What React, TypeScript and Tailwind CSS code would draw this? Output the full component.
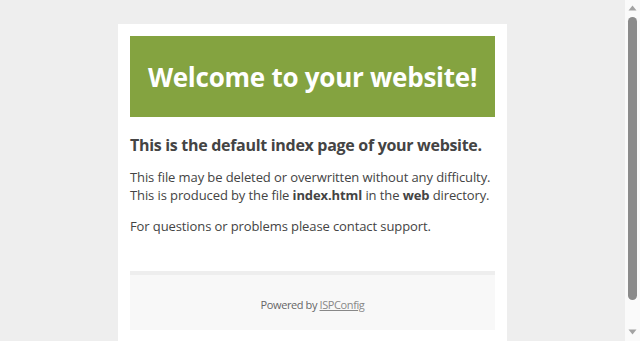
import React from "react";

function Scrollbar() {
  return (
    <div className="flex h-[341px] w-[15px] shrink-0 flex-col items-center bg-[#fafafa]">
      <div className="flex h-[15px] w-full items-center justify-center">
        <svg width="9" height="6" viewBox="0 0 9 6">
          <path d="M4.5 0.5 L8.5 5.5 L0.5 5.5 Z" fill="#a3a3a3" />
        </svg>
      </div>
      <div className="flex flex-1 w-full flex-col items-center pt-[2px]">
        <div className="h-[283px] w-[9px] rounded-full bg-[#8b8b8b]" />
      </div>
      <div className="flex h-[15px] w-full items-start justify-center pt-[3px]">
        <svg width="9" height="6" viewBox="0 0 9 6">
          <path d="M0.5 0.5 L8.5 0.5 L4.5 5.5 Z" fill="#a3a3a3" />
        </svg>
      </div>
    </div>
  );
}

export default function App() {
  return (
    <div
      className="flex h-[341px] overflow-hidden bg-[#eeeeee] text-[#444444]"
      style={{ fontFamily: '"Open Sans", "Noto Sans", sans-serif' }}
    >
      <div className="flex-1 overflow-hidden">
        <div className="pt-[24px] pb-[34px]">
          <div className="mx-auto w-[389px] bg-white p-[12px]">
            <div className="flex h-[81px] items-center justify-center bg-[#84a340]">
              <h1 className="text-[26px] font-bold text-white leading-none tracking-[-0.25px]">
                Welcome to your website!
              </h1>
            </div>
            <h2 className="mt-[17px] text-[16px] font-bold leading-[22px] text-[#444444] tracking-[-0.3px] whitespace-nowrap">
              This is the default index page of your website.
            </h2>
            <p className="mt-[12px] text-[13px] leading-[18px] tracking-[-0.1px] whitespace-nowrap">
              This file may be deleted or overwritten without any difficulty.
              <br />
              This is produced by the file <b>index.html</b> in the <b>web</b> directory.
            </p>
            <p className="mt-[13px] text-[13px] leading-[18px] tracking-[-0.1px]">
              For questions or problems please contact support.
            </p>
            <div className="mt-[36px] flex h-[59px] items-center justify-center border-t-[4px] border-[#eeeeee] bg-[#f8f8f8] pt-[5px] text-[11px] text-[#666666] tracking-[-0.4px]">
              <span>
                Powered by{" "}
                <a className="text-[#888888] underline decoration-[#888888]" href="#">
                  ISPConfig
                </a>
              </span>
            </div>
          </div>
        </div>
      </div>
      <Scrollbar />
    </div>
  );
}
